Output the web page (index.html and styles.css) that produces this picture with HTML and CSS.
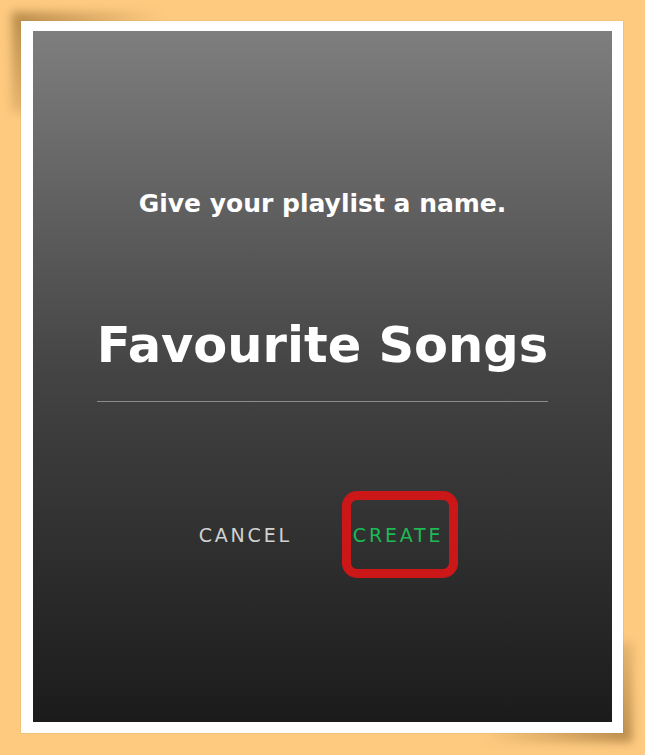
FILE: index.html
```html
<!DOCTYPE html>
<html>
<head>
<meta charset="utf-8">
<link rel="stylesheet" href="styles.css">
</head>
<body>
<div class="frame">
  <div class="panel">
    <h2 class="prompt">Give your playlist a name.</h2>
    <div class="name-field">
      <div class="name">Favourite Songs</div>
    </div>
    <div class="actions">
      <span class="btn cancel">CANCEL</span>
      <span class="btn create">CREATE</span>
    </div>
  </div>
</div>
</body>
</html>
```
FILE: styles.css
```css
html, body {
  margin: 0;
  padding: 0;
}
body {
  width: 645px;
  height: 755px;
  background: #fdca80;
  font-family: "DejaVu Sans", sans-serif;
  overflow: hidden;
  padding: 21px 0 0 21px;
  box-sizing: border-box;
}
.frame {
  position: relative;
  width: 602px;
  height: 712px;
  background: #fff;
  box-sizing: border-box;
  padding: 10px 11px 11px 12px;
  box-shadow: 0 0 1px rgba(160, 110, 40, 0.6);
}
.frame::before,
.frame::after {
  content: "";
  position: absolute;
  width: 160px;
  height: 100px;
  z-index: -1;
  filter: blur(5px);
}
.frame::before {
  left: -9px;
  top: -9px;
  background: linear-gradient(135deg, rgba(110, 70, 15, 0.5), rgba(110, 70, 15, 0) 60%);
}
.frame::after {
  right: -9px;
  bottom: -9px;
  background: linear-gradient(315deg, rgba(110, 70, 15, 0.5), rgba(110, 70, 15, 0) 60%);
}
.panel {
  width: 579px;
  height: 691px;
  background: linear-gradient(#7e7e7e, #434343 50%, #1b1b1b);
  display: flex;
  flex-direction: column;
  align-items: center;
  color: #fff;
}
.prompt {
  margin: 158px 0 0 0;
  font-size: 25px;
  font-weight: 700;
  line-height: 30px;
  white-space: nowrap;
}
.name-field {
  margin-top: 96px;
  width: 451px;
  border-bottom: 1px solid #8c8c8c;
  display: flex;
  justify-content: center;
  padding-bottom: 26px;
}
.name {
  font-size: 49.5px;
  font-weight: 700;
  line-height: 60px;
  white-space: nowrap;
}
.actions {
  margin-top: 89px;
  margin-left: 12px;
  display: flex;
  align-items: center;
  gap: 50px;
}
.btn {
  font-size: 19px;
  line-height: 22px;
  letter-spacing: 2.8px;
  font-weight: 400;
}
.cancel {
  color: #d2d2d2;
}
.create {
  color: #1db954;
  border: 9px solid #cc1719;
  border-radius: 15px;
  padding: 24px 6px 23px 2px;
}
```
